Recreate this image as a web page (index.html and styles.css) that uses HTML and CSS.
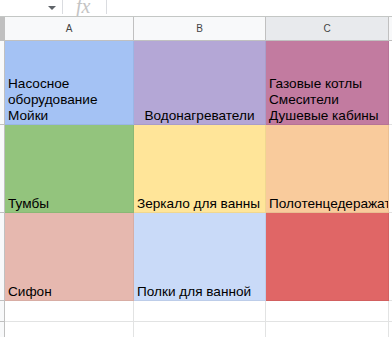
FILE: index.html
```html
<!DOCTYPE html>
<html lang="ru">
<head>
<meta charset="utf-8">
<link rel="stylesheet" href="styles.css">
</head>
<body>
<div class="formula-bar">
  <div class="namebox"><span class="caret"></span></div>
  <div class="fx">fx</div>
  <div class="formula-input"></div>
</div>
<div class="sheet">
  <div class="corner"></div>
  <div class="colhead">A</div>
  <div class="colhead">B</div>
  <div class="colhead selected">C</div>
  <div class="colhead rest"></div>

  <div class="rowhead r1"></div>
  <div class="cell r1 blue">Насосное<br>оборудование<br>Мойки</div>
  <div class="cell r1 purple center">Водонагреватели</div>
  <div class="cell r1 magenta">Газовые котлы<br>Смесители<br>Душевые кабины</div>
  <div class="cell r1 rest"></div>

  <div class="rowhead r2"></div>
  <div class="cell r2 green">Тумбы</div>
  <div class="cell r2 yellow">Зеркало для ванны</div>
  <div class="cell r2 orange">Полотенцедеражатели</div>
  <div class="cell r2 rest"></div>

  <div class="rowhead r3"></div>
  <div class="cell r3 pink">Сифон</div>
  <div class="cell r3 lightblue">Полки для ванной</div>
  <div class="cell r3 red"></div>
  <div class="cell r3 rest"></div>

  <div class="rowhead r4"></div>
  <div class="cell r4"></div>
  <div class="cell r4"></div>
  <div class="cell r4"></div>
  <div class="cell r4 rest"></div>

  <div class="rowhead r5"></div>
  <div class="cell r5"></div>
  <div class="cell r5"></div>
  <div class="cell r5"></div>
  <div class="cell r5 rest"></div>
</div>
</body>
</html>
```

FILE: styles.css
```css
* { box-sizing: border-box; }
html, body { margin: 0; padding: 0; background: #fff; }
body { font-family: "Liberation Sans", Arial, sans-serif; width: 392px; height: 337px; overflow: hidden; }

.formula-bar {
  display: flex;
  height: 17px;
  border-bottom: 1px solid #c4c7c5;
}
.namebox {
  width: 63px;
  border-right: 1px solid #dadce0;
  position: relative;
  height: 14px;
}
.caret {
  position: absolute;
  left: 48px;
  top: 6px;
  width: 0; height: 0;
  border-left: 4px solid transparent;
  border-right: 4px solid transparent;
  border-top: 4px solid #5f6368;
}
.fx {
  width: 44px;
  height: 14px;
  border-right: 1px solid #dadce0;
  font-family: "Liberation Serif", serif;
  font-style: italic;
  font-size: 20px;
  line-height: 12px;
  color: #c4c4c4;
  padding-left: 13px;
}
.formula-input { flex: 1; }

.sheet {
  display: grid;
  grid-template-columns: 5px 129px 132px 123px 3px;
  grid-template-rows: 24px 84px 88px 88px 21px 21px;
}
.corner {
  background: #c0c0c0;
  border-right: 1px solid #c0c0c0;
  border-bottom: 1px solid #c0c0c0;
}
.colhead {
  background: #f8f9fa;
  border-right: 1px solid #c0c0c0;
  border-bottom: 1px solid #c0c0c0;
  font-size: 10px;
  color: #444;
  display: flex;
  align-items: center;
  justify-content: center;
}
.colhead.selected { background: #e8eaed; }
.colhead.rest { background: #f8f9fa; border-right: none; }
.rowhead {
  background: #f8f9fa;
  border-right: 1px solid #c0c0c0;
  border-bottom: 1px solid #c0c0c0;
}
.cell {
  border-right: 1px solid #e2e3e3;
  border-bottom: 1px solid #e2e3e3;
  font-size: 13.6px;
  line-height: 16px;
  color: #000;
  padding: 0 3px 0 3px;
  display: flex;
  align-items: flex-end;
  white-space: nowrap;
  overflow: hidden;
}
.cell.center { justify-content: center; }
.cell.rest { border-right: none; }
.blue { background: #a4c2f4; }
.purple { background: #b4a7d6; }
.magenta { background: #c27ba0; }
.green { background: #93c47d; }
.yellow { background: #ffe599; }
.orange { background: #f9cb9c; }
.pink { background: #e6b8af; }
.lightblue { background: #c9daf8; }
.red { background: #e06666; }
.r1.blue, .r1.purple, .r1.magenta, .r2.green, .r2.yellow, .r2.orange, .r3.pink, .r3.lightblue, .r3.red {
  border-color: rgba(0, 0, 0, 0.06);
}
.magenta, .orange, .red { border-right-color: #d8d8d8; }
```
